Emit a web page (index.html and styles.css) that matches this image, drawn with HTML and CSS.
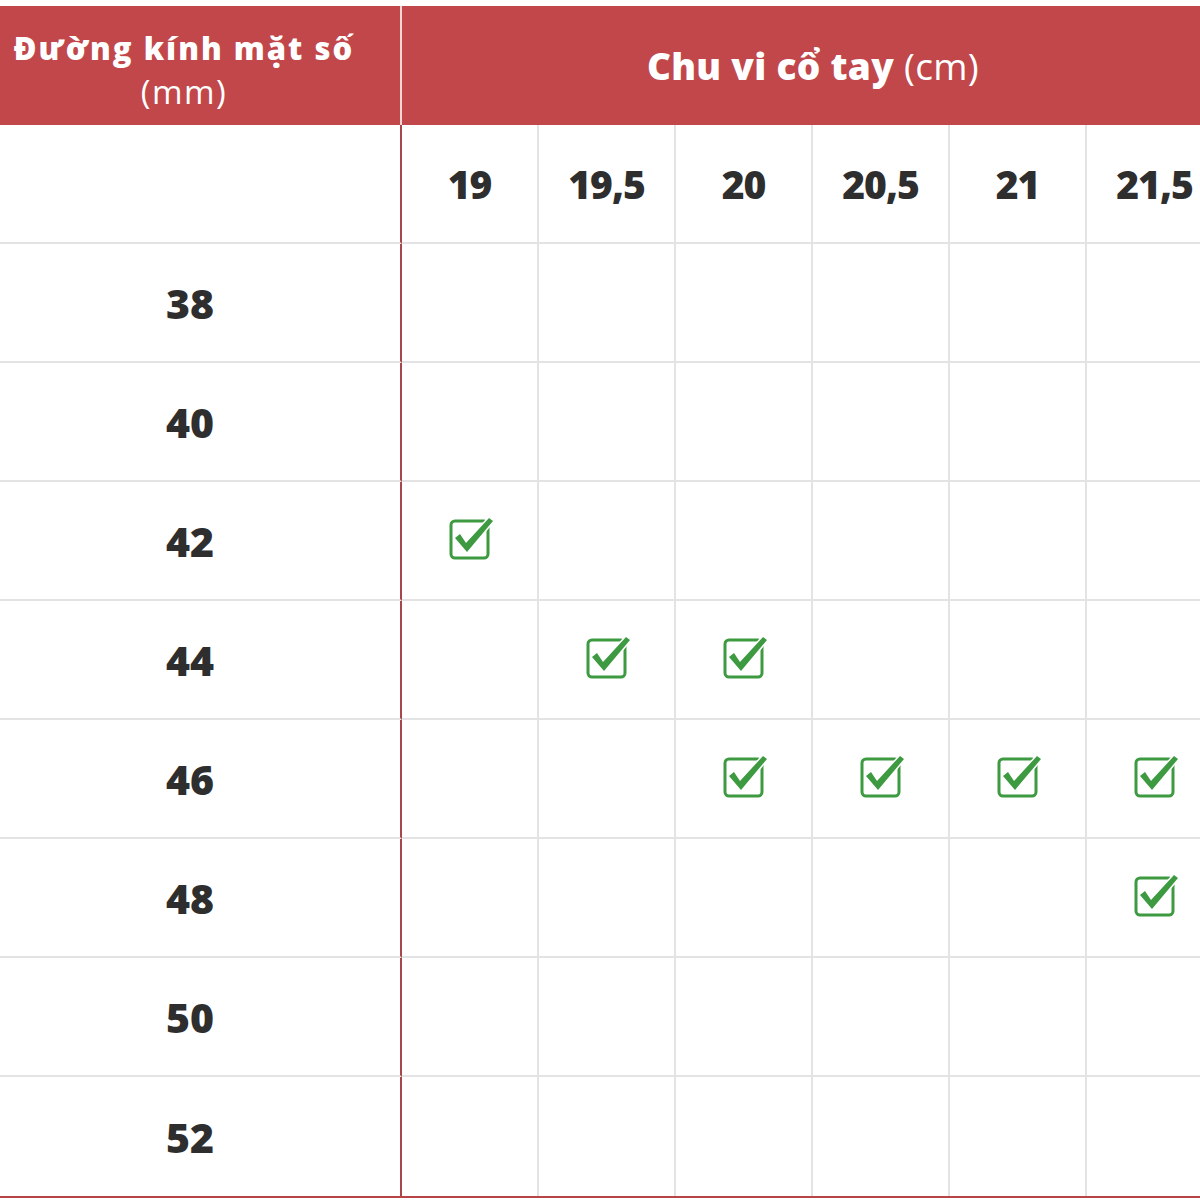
FILE: index.html
```html
<!DOCTYPE html>
<html lang="vi">
<head>
<meta charset="utf-8">
<title>Bảng size</title>
<link rel="stylesheet" href="styles.css">
</head>
<body>
<svg width="0" height="0" class="defs">
  <defs>
    <symbol id="chk" viewBox="0 0 46 46">
      <rect x="3" y="5" width="37" height="37" rx="4" fill="none" stroke="#3d9a41" stroke-width="3"/>
      <path d="M7 22 L12 18 L18 27 L41 2 L45 5 L19 36 Z" fill="#3d9a41" stroke="#fff" stroke-width="3" paint-order="stroke" stroke-linejoin="round"/>
    </symbol>
  </defs>
</svg>
<div class="wrap">
  <div class="table">
    <div class="hcell hleft"><div class="b line">Đường kính mặt số</div><div class="r line mm">(mm)</div></div>
    <div class="hcell hright"><span class="title"><span class="b">Chu vi cổ tay</span> <span class="r">(cm)</span></span></div>

    <div class="lcell"></div>
    <div class="cell num">19</div>
    <div class="cell num">19,5</div>
    <div class="cell num">20</div>
    <div class="cell num">20,5</div>
    <div class="cell num">21</div>
    <div class="cell num">21,5</div>

    <div class="lcell num">38</div>
    <div class="cell"></div><div class="cell"></div><div class="cell"></div><div class="cell"></div><div class="cell"></div><div class="cell"></div>

    <div class="lcell num">40</div>
    <div class="cell"></div><div class="cell"></div><div class="cell"></div><div class="cell"></div><div class="cell"></div><div class="cell"></div>

    <div class="lcell num">42</div>
    <div class="cell"><svg class="ic"><use href="#chk"/></svg></div><div class="cell"></div><div class="cell"></div><div class="cell"></div><div class="cell"></div><div class="cell"></div>

    <div class="lcell num">44</div>
    <div class="cell"></div><div class="cell"><svg class="ic"><use href="#chk"/></svg></div><div class="cell"><svg class="ic"><use href="#chk"/></svg></div><div class="cell"></div><div class="cell"></div><div class="cell"></div>

    <div class="lcell num">46</div>
    <div class="cell"></div><div class="cell"></div><div class="cell"><svg class="ic"><use href="#chk"/></svg></div><div class="cell"><svg class="ic"><use href="#chk"/></svg></div><div class="cell"><svg class="ic"><use href="#chk"/></svg></div><div class="cell"><svg class="ic"><use href="#chk"/></svg></div>

    <div class="lcell num">48</div>
    <div class="cell"></div><div class="cell"></div><div class="cell"></div><div class="cell"></div><div class="cell"></div><div class="cell"><svg class="ic"><use href="#chk"/></svg></div>

    <div class="lcell num">50</div>
    <div class="cell"></div><div class="cell"></div><div class="cell"></div><div class="cell"></div><div class="cell"></div><div class="cell"></div>

    <div class="lcell num">52</div>
    <div class="cell"></div><div class="cell"></div><div class="cell"></div><div class="cell"></div><div class="cell"></div><div class="cell"></div>
  </div>
</div>
</body>
</html>
```

FILE: styles.css
```css
html, body {
  margin: 0;
  padding: 0;
  background: #fff;
  overflow: hidden;
}
.defs {
  position: absolute;
  width: 0;
  height: 0;
}
.wrap {
  width: 1200px;
  height: 1200px;
  overflow: hidden;
  padding-top: 6px;
  box-sizing: border-box;
  font-family: "Open Sans", "Liberation Sans", sans-serif;
}
.table {
  display: grid;
  grid-template-columns: 402px repeat(6, 137px);
  grid-template-rows: 119px repeat(9, 119px);
  width: 1224px;
  border-bottom: 2px solid #b94448;
}
.hcell {
  background: #c1474b;
  color: #fff;
  display: flex;
  align-items: center;
  justify-content: center;
  text-align: center;
}
.hleft {
  flex-direction: column;
  border-right: 2px solid #f3d6d7;
  box-sizing: border-box;
  padding: 9px 32px 0 0;
  font-size: 31px;
  letter-spacing: 2px;
}
.hleft .line {
  height: 44px;
  line-height: 44px;
}
.hleft .mm {
  font-size: 33px;
  letter-spacing: 1.5px;
}
.hright {
  grid-column: span 6;
  font-size: 37px;
  letter-spacing: 0.3px;
}
.b { font-weight: 800; }
.r { font-weight: 400; }
.cell, .lcell {
  box-sizing: border-box;
  border-bottom: 2px solid #e3e3e3;
  display: flex;
  align-items: center;
  justify-content: center;
}
.cell {
  border-right: 2px solid #e3e3e3;
}
.lcell {
  border-right: 2px solid #a8474a;
  padding-right: 20px;
}
.table > .cell:nth-last-child(-n+6),
.table > .lcell:nth-last-child(7) {
  border-bottom: none;
}
.num {
  font-size: 39px;
  font-weight: 800;
  color: #2e2e2e;
  letter-spacing: -1px;
}
.lcell.num {
  font-size: 41px;
  letter-spacing: 0;
}
.ic {
  width: 46px;
  height: 46px;
  margin: -4px 0 0 2px;
}
```
